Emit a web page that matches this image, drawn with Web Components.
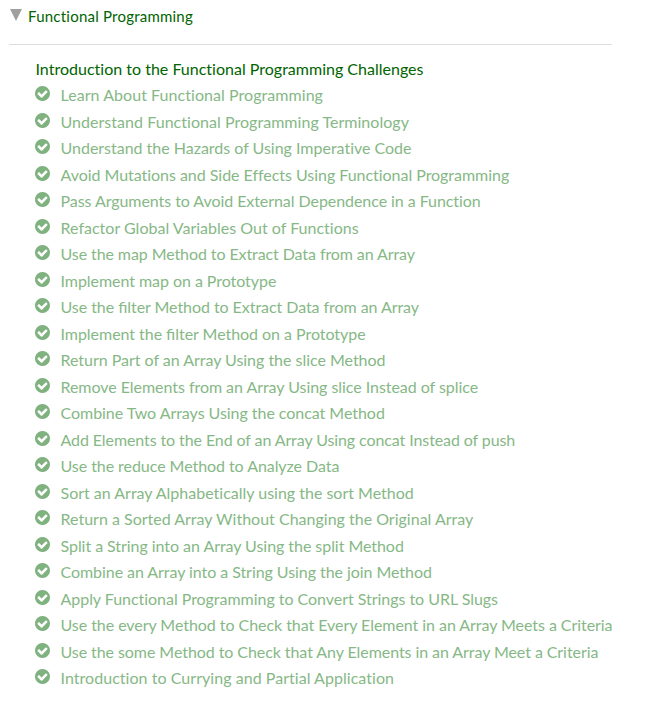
<!DOCTYPE html>
<html lang="en"><head><meta charset="utf-8"><title>Functional Programming</title>
<style>html,body{margin:0;background:#fff}body{font-family:Lato,"Liberation Sans",sans-serif;font-size:16px}</style></head><body>
<map-block heading="Functional Programming" intro="Introduction to the Functional Programming Challenges"></map-block>
<script>
// Each lesson: title and the width of its line in pixels.
const lessons=[["Learn About Functional Programming",262.5],["Understand Functional Programming Terminology",348.5],["Understand the Hazards of Using Imperative Code",351],["Avoid Mutations and Side Effects Using Functional Programming",448.7],["Pass Arguments to Avoid External Dependence in a Function",420.2],["Refactor Global Variables Out of Functions",298.2],["Use the map Method to Extract Data from an Array",354.4],["Implement map on a Prototype",215.8],["Use the filter Method to Extract Data from an Array",358.4],["Implement the filter Method on a Prototype",305],["Return Part of an Array Using the slice Method",325],["Remove Elements from an Array Using slice Instead of splice",417.6],["Combine Two Arrays Using the concat Method",324.3],["Add Elements to the End of an Array Using concat Instead of push",454.7],["Use the reduce Method to Analyze Data",278.8],["Sort an Array Alphabetically using the sort Method",353.3],["Return a Sorted Array Without Changing the Original Array",412.8],["Split a String into an Array Using the split Method",343.3],["Combine an Array into a String Using the join Method",371.3],["Apply Functional Programming to Convert Strings to URL Slugs",437.5],["Use the every Method to Check that Every Element in an Array Meets a Criteria",552],["Use the some Method to Check that Any Elements in an Array Meet a Criteria",537.8],["Introduction to Currying and Partial Application",333.5]];
// A single line of text, tracked so that it fills a given width.
customElements.define('fit-text',class extends HTMLElement{connectedCallback(){
const r=this.attachShadow({mode:'open'});
r.innerHTML='<style>:host{display:inline-block;white-space:nowrap;font-variant-ligatures:none}b{font-weight:inherit;font-variant-ligatures:common-ligatures;letter-spacing:0}</style><span></span>';
const s=r.querySelector('span'),t=this.getAttribute('text');s.innerHTML=t.replace('filter','<b>fi</b>lter');
s.style.letterSpacing=((+this.getAttribute('width')-s.getBoundingClientRect().width)/t.length).toFixed(4)+'px'}});
customElements.define('lesson-item',class extends HTMLElement{constructor(){super();this.attachShadow({mode:'open'}).innerHTML=`<style>:host{display:flex;height:26.5px;line-height:26.5px;color:#86b886}svg{width:15px;height:15px;flex:none;margin:4.25px 10.5px 0 0;color:#7fb27f}</style><svg viewBox="0 0 1536 1536"><path fill="currentColor" d="M1284 606q0-28-18-46l-91-90q-19-19-45-19t-45 19L677 877 451 651q-19-19-45-19t-45 19l-91 90q-18 18-18 46 0 27 18 45l362 362q19 19 45 19 27 0 46-19l543-543q18-18 18-45zm252 162q0 209-103 385.500T1153.500 1433 768 1536t-385.500-103T103 1153.500 0 768t103-385.500T382.500 103 768 0t385.500 103T1433 382.500 1536 768z"/></svg><slot></slot>`}});
customElements.define('map-block',class extends HTMLElement{connectedCallback(){const r=this.attachShadow({mode:'open'});r.innerHTML=`<style>:host{display:block;width:603px;margin-left:9px;color:#006400}header{display:flex;box-sizing:border-box;height:45px;padding-top:6px;border-bottom:1px solid #ddd;line-height:20px;font-size:15px}svg{width:14px;height:12px;margin:3px 5px 0 0}main{padding:11px 0 0 26px}.intro{height:26px;line-height:26px;padding-left:.5px}</style><header><svg viewBox="0 0 14 12"><path d="M1 0H13L7 12Z" fill="#a0a0a0"/></svg><fit-text width="165" text="${this.getAttribute('heading')}"></fit-text></header><main><div class="intro"><fit-text width="388" text="${this.getAttribute('intro')}"></fit-text></div></main>`;const m=r.querySelector('main');for(const [t,w] of lessons){const e=document.createElement('lesson-item');e.innerHTML=`<fit-text width="${w}" text="${t}"></fit-text>`;m.append(e)}}});
</script></body></html>
